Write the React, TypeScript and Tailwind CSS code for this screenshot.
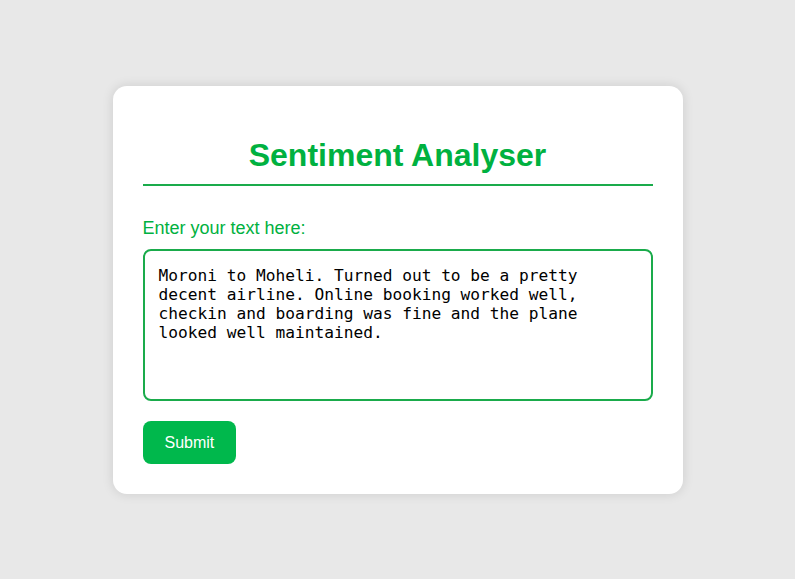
const App = () => {
  const text =
    "Moroni to Moheli. Turned out to be a pretty decent airline. Online booking worked well, checkin and boarding was fine and the plane looked well maintained.";

  return (
    <div className="min-h-screen w-full bg-[#e8e8e8] flex items-center justify-center font-['Liberation_Sans',Arial,sans-serif]">
      <div className="w-[570px] bg-white rounded-[14px] shadow-[0_0_12px_rgba(0,0,0,0.12)] px-[30px] pt-[30px] pb-[30px]">
        {/* heading */}
        <h1 className="mt-[21px] text-[32px] leading-[37px] font-bold text-center text-[#00b140] pb-[10px] border-b-2 border-[#1aab4b]">
          Sentiment Analyser
        </h1>
        <div className="mt-[32px]">
          <label className="block text-[18px] leading-[21px] text-[#00b140] mb-[10px]">
            Enter your text here:
          </label>
          <textarea
            defaultValue={text}
            className="block w-full h-[152px] resize-none border-2 border-[#1aab4b] rounded-[8px] px-[14px] pt-[15px] pb-3 font-['DejaVu_Sans_Mono',monospace] text-[16.2px] leading-[19.3px] text-black outline-none"
          />
        </div>
        <button className="mt-[20px] bg-[#00b84c] text-white text-[16px] leading-[19px] px-[22px] py-3 rounded-[8px]">
          Submit
        </button>
      </div>
    </div>
  );
};

export default App;
